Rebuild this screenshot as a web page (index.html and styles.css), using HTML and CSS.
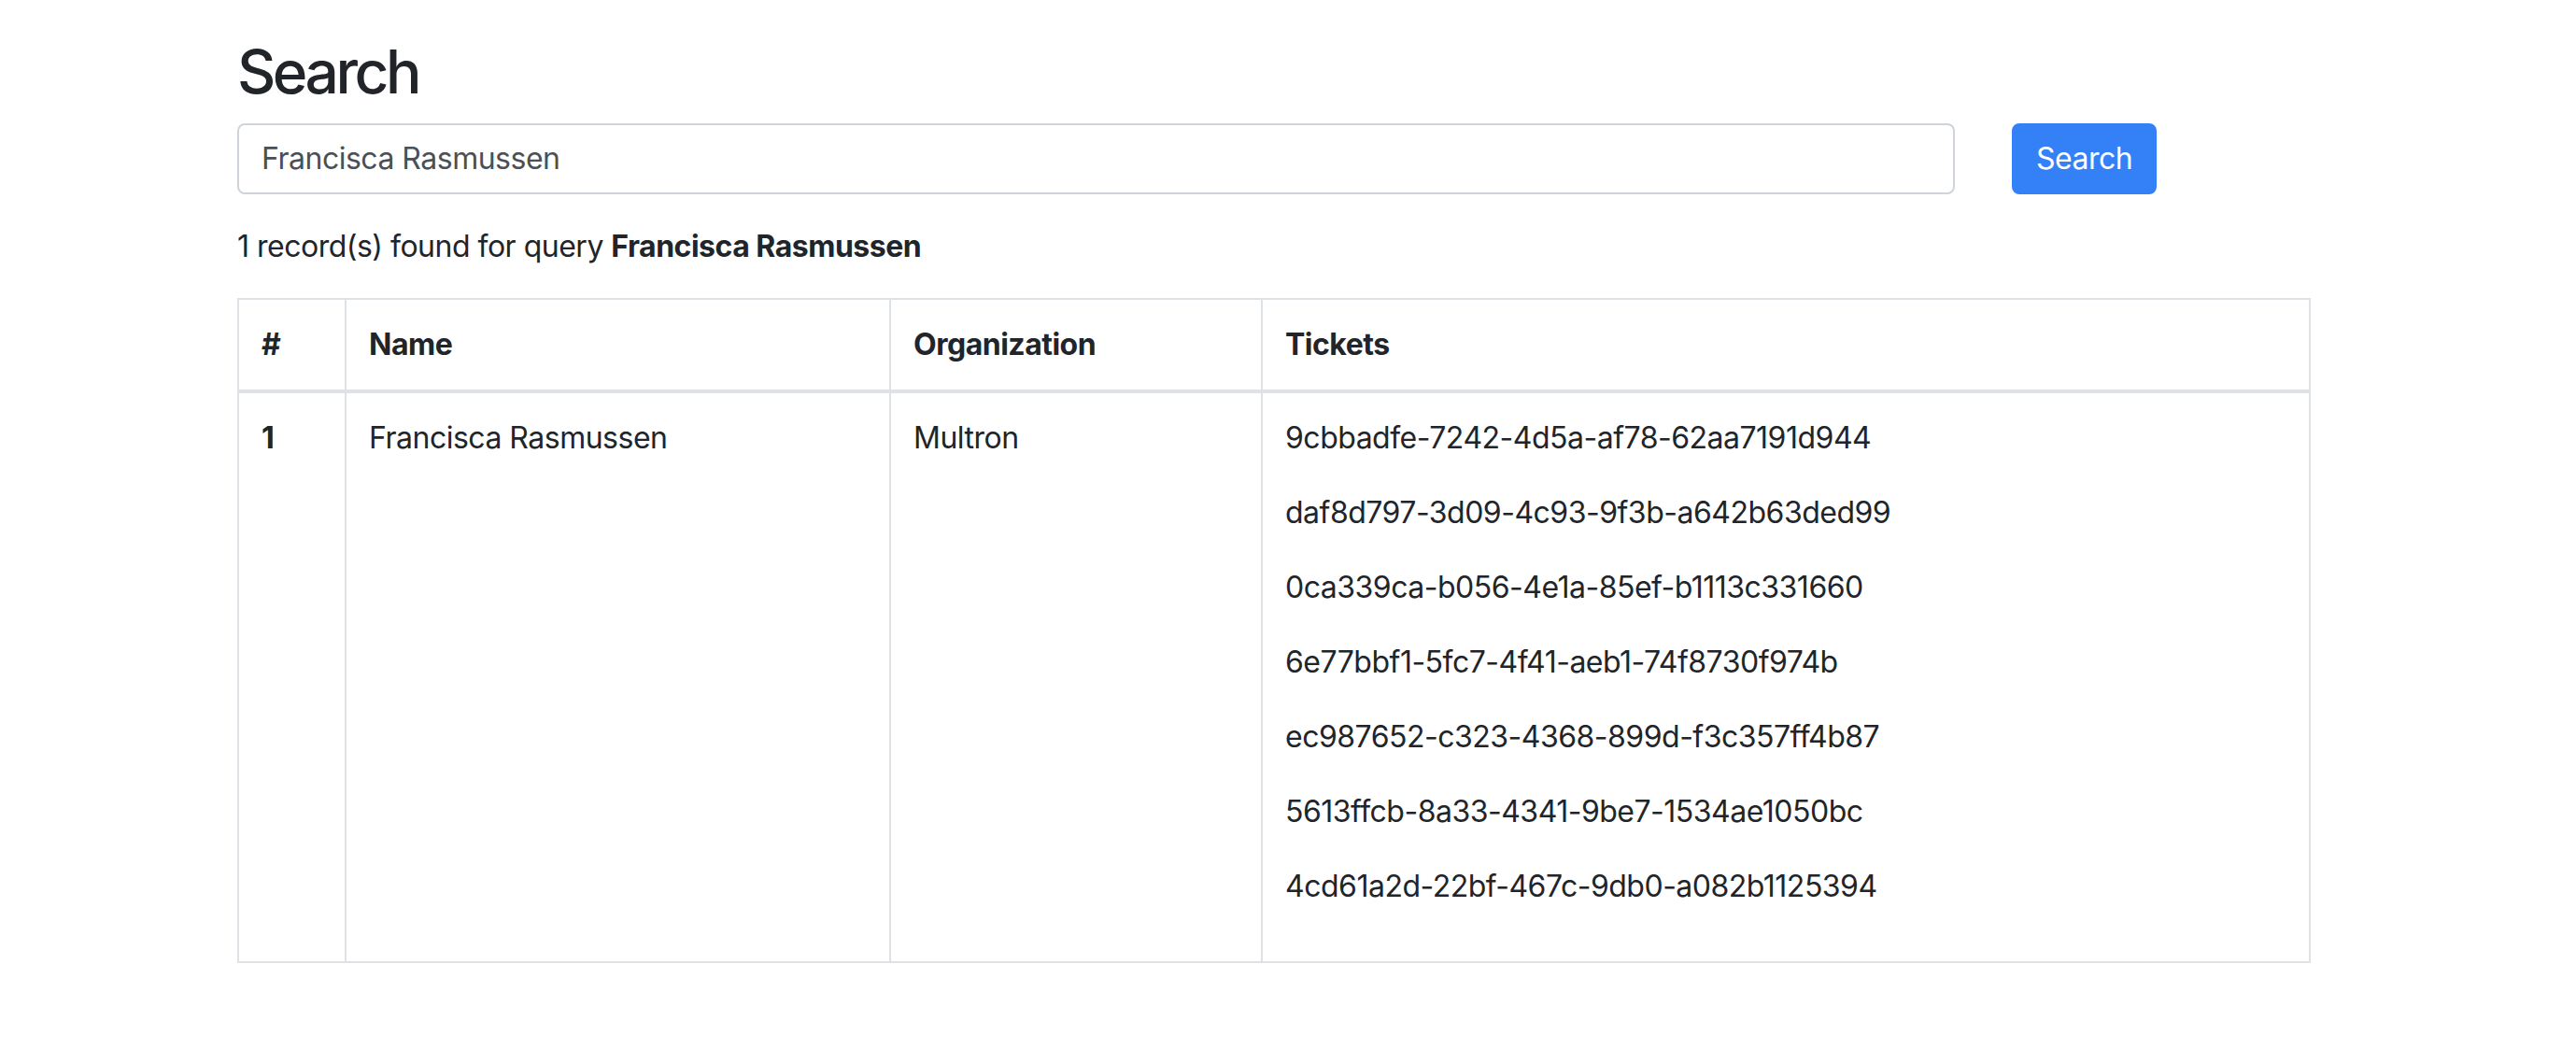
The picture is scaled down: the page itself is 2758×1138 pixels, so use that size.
FILE: index.html
```html
<!DOCTYPE html>
<html lang="en">
<head>
<meta charset="utf-8">
<title>Search</title>
<link rel="stylesheet" href="styles.css">
</head>
<body>
<main class="container">
  <h2 class="title">Search</h2>
  <form class="search-form">
    <input class="search-input" type="text" value="Francisca Rasmussen">
    <button class="search-btn" type="button">Search</button>
  </form>
  <p class="result-summary">1 record(s) found for query <strong>Francisca Rasmussen</strong></p>
  <table class="results">
    <thead>
      <tr>
        <th class="col-num">#</th>
        <th class="col-name">Name</th>
        <th class="col-org">Organization</th>
        <th class="col-tickets">Tickets</th>
      </tr>
    </thead>
    <tbody>
      <tr>
        <th class="row-num">1</th>
        <td>Francisca Rasmussen</td>
        <td>Multron</td>
        <td>
          <p class="ticket">9cbbadfe-7242-4d5a-af78-62aa7191d944</p>
          <p class="ticket">daf8d797-3d09-4c93-9f3b-a642b63ded99</p>
          <p class="ticket">0ca339ca-b056-4e1a-85ef-b1113c331660</p>
          <p class="ticket">6e77bbf1-5fc7-4f41-aeb1-74f8730f974b</p>
          <p class="ticket">ec987652-c323-4368-899d-f3c357ff4b87</p>
          <p class="ticket">5613ffcb-8a33-4341-9be7-1534ae1050bc</p>
          <p class="ticket">4cd61a2d-22bf-467c-9db0-a082b1125394</p>
        </td>
      </tr>
    </tbody>
  </table>
</main>
</body>
</html>
```
FILE: styles.css
```css
* { box-sizing: border-box; }

html, body {
  margin: 0;
  padding: 0;
  background: #ffffff;
}

body {
  font-family: Inter, "Noto Sans", "Liberation Sans", sans-serif;
  font-size: 32px;
  line-height: 1.5;
  letter-spacing: -0.5px;
  color: #212529;
}

.container {
  width: 2220px;
  margin-left: 254px;
  padding-top: 39px;
}

.title {
  margin: 0 0 16px 0;
  font-size: 64px;
  font-weight: 500;
  line-height: 1.2;
  letter-spacing: -3.5px;
}

.search-form {
  display: flex;
  gap: 61px;
  margin: 0 0 32px 0;
}

.search-input {
  flex: 0 0 1839px;
  height: 76px;
  padding: 12px 24px;
  font-family: inherit;
  font-size: 32px;
  line-height: 1.5;
  letter-spacing: -0.5px;
  color: #495057;
  background: #fff;
  border: 2px solid #ced4da;
  border-radius: 8px;
  outline: none;
}

.search-btn {
  height: 76px;
  padding: 12px 24px;
  font-family: inherit;
  font-size: 32px;
  line-height: 1.5;
  letter-spacing: -0.5px;
  color: #fff;
  background: #3480f6;
  border: 2px solid #3480f6;
  border-radius: 8px;
}

.result-summary {
  margin: 0 0 31px 0;
}

.result-summary strong {
  font-weight: 700;
}

.results {
  width: 2220px;
  border-collapse: collapse;
  border: 2px solid #dee2e6;
}

.results th,
.results td {
  padding: 24px;
  border: 2px solid #dee2e6;
  text-align: left;
  vertical-align: top;
}

.results thead th {
  vertical-align: bottom;
  border-bottom-width: 4px;
  font-weight: 700;
}

.results .row-num { font-weight: 700; }

.col-num { width: 115px; }
.col-name { width: 583px; }
.col-org { width: 398px; }

.ticket {
  margin: 0 0 32px 0;
}
```
